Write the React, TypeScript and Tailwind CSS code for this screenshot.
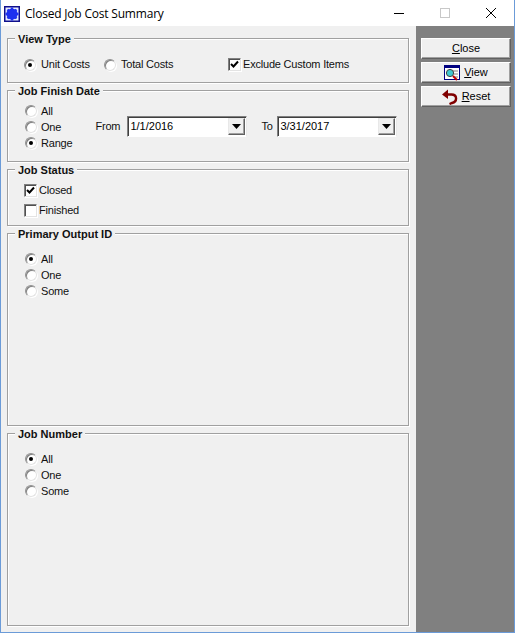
import type { ReactNode } from "react";

function Radio({ checked = false }: { checked?: boolean }) {
  return (
    <span className="relative inline-flex w-[12px] h-[12px] shrink-0 items-center justify-center rounded-full bg-white border border-t-[#909090] border-l-[#909090] border-r-[#e3e3e3] border-b-[#e3e3e3] shadow-[inset_1px_1px_0_#808080,1px_1px_0_#fff]">
      {checked && <span className="w-[4px] h-[4px] rounded-full bg-black" />}
    </span>
  );
}

function Check({ checked = false }: { checked?: boolean }) {
  return (
    <span className="inline-flex w-[13px] h-[13px] shrink-0 items-center justify-center bg-white border border-t-[#808080] border-l-[#808080] border-r-[#e3e3e3] border-b-[#e3e3e3] shadow-[inset_1px_1px_0_#505050,1px_1px_0_#fff]">
      {checked && (
        <svg width="9" height="9" viewBox="0 0 9 9" aria-hidden="true">
          <path d="M1 4 L3.5 6.5 L8 1.5" fill="none" stroke="#000" strokeWidth="2" />
        </svg>
      )}
    </span>
  );
}

function Group({ title, className, children }: { title: string; className: string; children: ReactNode }) {
  return (
    <div className={`relative border border-[#a0a0a0] shadow-[inset_1px_1px_0_#fff,1px_1px_0_#fff] tracking-[-0.2px] ${className}`}>
      <span className="absolute left-[7px] top-[-6px] bg-[#f0f0f0] px-[3px] leading-[13px] font-bold text-[11px] text-[#111] tracking-normal">
        {title}
      </span>
      {children}
    </div>
  );
}

function RadioList({ items, selected }: { items: string[]; selected: string }) {
  return (
    <div className="flex flex-col gap-[4px]">
      {items.map((label) => (
        <div key={label} className="flex items-center gap-[4px] h-[12px]">
          <Radio checked={label === selected} />
          <span>{label}</span>
        </div>
      ))}
    </div>
  );
}

function DateCombo({ value }: { value: string }) {
  return (
    <div className="flex items-center w-[120px] h-[21px] bg-white border border-t-[#808080] border-l-[#808080] border-r-[#e8e8e8] border-b-[#fff] shadow-[inset_1px_1px_0_#404040] pl-[2px] pr-[1px] tracking-normal">
      <span className="flex-1 text-black">{value}</span>
      <span className="flex items-center justify-center w-[17px] h-[17px] bg-[#f0f0f0] border border-t-[#e8e8e8] border-l-[#e8e8e8] border-r-[#606060] border-b-[#606060] shadow-[inset_-1px_-1px_0_#a0a0a0]">
        <svg width="9" height="5" viewBox="0 0 9 5" aria-hidden="true">
          <path d="M0 0 H9 L4.5 5 Z" fill="#000" />
        </svg>
      </span>
    </div>
  );
}

function ActionButton({ first, rest, icon, gap }: { first: string; rest: string; icon?: ReactNode; gap?: string }) {
  return (
    <button
      type="button"
      className={`flex items-center justify-center w-[90px] h-[21px] bg-[#f0f0f0] text-black border border-t-white border-l-white border-r-[#606060] border-b-[#606060] shadow-[inset_-1px_-1px_0_#a0a0a0] ${gap ?? ""}`}
    >
      {icon}
      <span>
        <span className="underline">{first}</span>
        {rest}
      </span>
    </button>
  );
}

function ViewIcon() {
  return (
    <svg width="16" height="16" viewBox="0 0 16 16" aria-hidden="true">
      <rect x="0.5" y="0.5" width="15" height="14" fill="#fff" stroke="#000080" />
      <rect x="0" y="0" width="16" height="3" fill="#000080" />
      <path d="M9 6 H14 M10 9 H14 M11 12 H14" stroke="#808080" />
      <circle cx="6" cy="8" r="3.6" fill="#40c8d0" stroke="#404040" />
      <path d="M9 11 L13 15" stroke="#c00000" strokeWidth="2" />
    </svg>
  );
}

function ResetIcon() {
  return (
    <svg width="16" height="16" viewBox="0 0 16 16" aria-hidden="true">
      <path d="M4 5.5 H9.5 C15.5 5.5 15.5 12.5 10 14 L7.5 15" fill="none" stroke="#800000" strokeWidth="2.4" />
      <path d="M0 5.5 L6 0.5 V10 Z" fill="#800000" />
    </svg>
  );
}

function AppIcon() {
  return (
    <svg width="16" height="16" viewBox="0 0 16 16" aria-hidden="true">
      <rect width="16" height="16" fill="#e8ecff" />
      <rect x="0.75" y="0.75" width="14.5" height="14.5" fill="none" stroke="#10108c" strokeWidth="1.5" />
      <circle cx="8" cy="8" r="5.6" fill="#1c30f0" />
      <path d="M8 1.5 V14.5 M1.5 8 H14.5 M3.5 3.5 L12.5 12.5 M12.5 3.5 L3.5 12.5" stroke="#1c30f0" strokeWidth="2.4" />
    </svg>
  );
}

export default function App() {
  return (
    <div className="w-[515px] h-[633px] flex flex-col bg-white border border-t-0 border-[#6b9bd8] text-[11px] leading-[13px] text-[#111] font-['Liberation_Sans',Arial,sans-serif] overflow-hidden">
      <div className="flex items-center h-[26px] shrink-0 bg-white">
        <span className="ml-[3px] mt-[1px]">
          <AppIcon />
        </span>
        <span className="ml-[5px] text-[12px] tracking-[-0.2px] text-black font-['Open_Sans',sans-serif]">Closed Job Cost Summary</span>
        <span className="ml-auto w-[10px] h-[1px] mr-[36px] mt-[1px] bg-black" />
        <span className="w-[10px] h-[10px] mr-[36px] border border-[#c8c8c8]" />
        <svg className="mr-[18px]" width="10" height="10" viewBox="0 0 10 10" aria-hidden="true">
          <path d="M0 0 L10 10 M10 0 L0 10" stroke="#000" strokeWidth="1" />
        </svg>
      </div>

      <div className="flex flex-1 min-h-0">
        <div className="w-[415px] shrink-0 bg-[#f0f0f0] pl-[6px] pt-[12px] flex flex-col gap-[7px]">
          <Group title="View Type" className="w-[402px] h-[45px] flex items-center pl-[16px] pt-[8px]">
            <Radio checked />
            <span className="ml-[5px] w-[63px]">Unit Costs</span>
            <Radio />
            <span className="ml-[5px] w-[107px]">Total Costs</span>
            <Check checked />
            <span className="ml-[2px]">Exclude Custom Items</span>
          </Group>

          <Group title="Job Finish Date" className="w-[402px] h-[72px] flex pl-[17px] pt-[14px]">
            <RadioList items={["All", "One", "Range"]} selected="Range" />
            <div className="flex items-center h-[21px] mt-[11px] ml-[23px]">
              <span className="w-[32px]">From</span>
              <DateCombo value="1/1/2016" />
              <span className="ml-[14px] w-[16px]">To</span>
              <DateCombo value="3/31/2017" />
            </div>
          </Group>

          <Group title="Job Status" className="w-[402px] h-[57px] flex flex-col gap-[7px] pl-[16px] pt-[14px]">
            <div className="flex items-center gap-[2px]">
              <Check checked />
              <span>Closed</span>
            </div>
            <div className="flex items-center gap-[2px]">
              <Check />
              <span>Finished</span>
            </div>
          </Group>

          <Group title="Primary Output ID" className="w-[402px] h-[193px] pl-[17px] pt-[19px]">
            <RadioList items={["All", "One", "Some"]} selected="All" />
          </Group>

          <Group title="Job Number" className="w-[402px] h-[193px] pl-[17px] pt-[19px]">
            <RadioList items={["All", "One", "Some"]} selected="All" />
          </Group>
        </div>

        <div className="flex-1 bg-[#808080] pl-[5px] pt-[12px] flex flex-col gap-[3px]">
          <ActionButton first="C" rest="lose" />
          <ActionButton first="V" rest="iew" icon={<ViewIcon />} gap="gap-[4px]" />
          <ActionButton first="R" rest="eset" icon={<ResetIcon />} gap="gap-[4px]" />
        </div>
      </div>
    </div>
  );
}
